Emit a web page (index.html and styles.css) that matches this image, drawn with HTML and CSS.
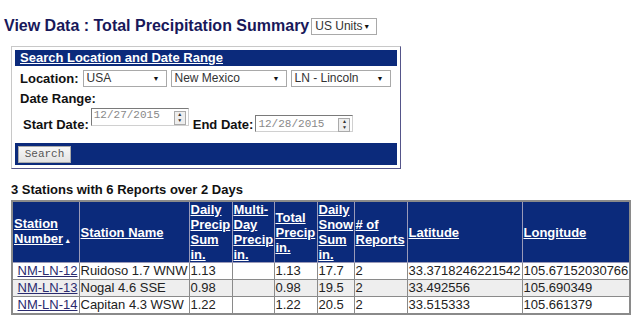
FILE: index.html
```html
<!DOCTYPE html>
<html lang="en">

<head>
  <meta charset="UTF-8">
  <title>View Data : Total Precipitation Summary</title>
  <link rel="stylesheet" href="styles.css">
</head>

<body>
  <div class="head">
    <h1 class="title">View Data : Total Precipitation Summary</h1>
    <span class="select units">US Units<i class="caret">&#9660;</i></span>
  </div>

  <div class="search">
    <div class="search-top"><a href="#">Search Location and Date Range</a></div>
    <div class="row loc">
      <b>Location:</b>
      <span class="select country">USA<i class="caret">&#9660;</i></span>
      <span class="select state">New Mexico<i class="caret">&#9660;</i></span>
      <span class="select county">LN - Lincoln<i class="caret">&#9660;</i></span>
    </div>
    <div class="row range"><b>Date Range:</b></div>
    <div class="row dates">
      <b class="start-label">Start Date:</b>
      <span class="date start">12/27/2015<i class="spin"><em>&#9650;</em><em>&#9660;</em></i></span>
      <b class="end-label">End Date:</b>
      <span class="date end">12/28/2015<i class="spin"><em>&#9650;</em><em>&#9660;</em></i></span>
    </div>
    <div class="search-bottom"><span class="btn">Search</span></div>
  </div>

  <p class="summary">3 Stations with 6 Reports over 2 Days</p>

  <table class="data">
    <colgroup>
      <col style="width: 67px">
      <col style="width: 110px">
      <col style="width: 43px">
      <col style="width: 42px">
      <col style="width: 43px">
      <col style="width: 37px">
      <col style="width: 53px">
      <col style="width: 115px">
      <col style="width: 108px">
    </colgroup>
    <thead>
      <tr>
        <th><a href="#">Station Number</a><span class="sort">&#9650;</span></th>
        <th><a href="#">Station Name</a></th>
        <th><a href="#">Daily Precip Sum in.</a></th>
        <th><a href="#">Multi-Day Precip in.</a></th>
        <th><a href="#">Total Precip in.</a></th>
        <th><a href="#">Daily Snow Sum in.</a></th>
        <th><a href="#"># of Reports</a></th>
        <th><a href="#">Latitude</a></th>
        <th><a href="#">Longitude</a></th>
      </tr>
    </thead>
    <tbody>
      <tr>
        <td class="num"><a href="#">NM-LN-12</a></td>
        <td>Ruidoso 1.7 WNW</td>
        <td>1.13</td>
        <td></td>
        <td>1.13</td>
        <td>17.7</td>
        <td>2</td>
        <td>33.3718246221542</td>
        <td>105.67152030766</td>
      </tr>
      <tr class="alt">
        <td class="num"><a href="#">NM-LN-13</a></td>
        <td>Nogal 4.6 SSE</td>
        <td>0.98</td>
        <td></td>
        <td>0.98</td>
        <td>19.5</td>
        <td>2</td>
        <td>33.492556</td>
        <td>105.690349</td>
      </tr>
      <tr>
        <td class="num"><a href="#">NM-LN-14</a></td>
        <td>Capitan 4.3 WSW</td>
        <td>1.22</td>
        <td></td>
        <td>1.22</td>
        <td>20.5</td>
        <td>2</td>
        <td>33.515333</td>
        <td>105.661379</td>
      </tr>
    </tbody>
  </table>
</body>

</html>
```

FILE: styles.css
```css
body {
  margin: 0;
  font-family: "Liberation Sans", Arial, sans-serif;
  color: #222;
}

.head {
  display: flex;
  align-items: center;
  height: 20px;
  margin: 16px 0 0 4px;
}

.title {
  margin: 0;
  color: #18185a;
  font-size: 16px;
  font-weight: bold;
}

.select {
  position: relative;
  display: inline-block;
  box-sizing: border-box;
  height: 17px;
  padding-left: 3px;
  border: 1px solid #a9a9a9;
  background: #fff;
  color: #333;
  font-size: 12px;
  line-height: 15px;
}

.select .caret {
  position: absolute;
  right: 6px;
  top: 0;
  color: #111;
  font-size: 7px;
  font-style: normal;
}

.units {
  width: 66px;
  margin-left: 2px;
}

/* search box */
.search {
  box-sizing: border-box;
  width: 390px;
  margin: 10px 0 0 11px;
  padding: 3px;
  border: 1px solid;
  border-color: #c8c8c8 #55558a #55558a #c8c8c8;
}

.search-top {
  height: 16px;
  padding-left: 5px;
  background: #0b2a7b;
  font-size: 13px;
  font-weight: bold;
  line-height: 16px;
}

.search-top a,
.data th a {
  color: #fff;
}

.row {
  display: flex;
  align-items: center;
  padding-left: 5px;
  font-size: 13px;
  color: #111;
}

.loc {
  height: 20px;
  margin-top: 2px;
}

.loc b {
  margin-right: 4px;
}

.loc .select {
  margin-right: 4px;
}

.country {
  width: 84px;
}

.state {
  width: 116px;
}

.county {
  width: 100px;
}

.range {
  height: 16px;
  margin-top: 2px;
}

.dates {
  align-items: flex-end;
  height: 26px;
  padding-left: 8px;
  padding-bottom: 7px;
}

.dates b {
  line-height: 15px;
}

.date {
  position: relative;
  box-sizing: border-box;
  width: 98px;
  height: 18px;
  margin: 0 4px 0 2px;
  padding-left: 2px;
  border: 1px solid;
  border-color: #7a7a7a #d0d0d0 #d0d0d0 #7a7a7a;
  color: #888;
  font-family: "Liberation Mono", "Courier New", monospace;
  font-size: 11px;
  line-height: 12px;
}

.start {
  margin-bottom: 6px;
}

.end {
  height: 17px;
  line-height: 16px;
}

.spin {
  position: absolute;
  right: 2px;
  top: 2px;
  display: flex;
  flex-direction: column;
  width: 10px;
  height: 12px;
  border: 1px solid #aaa;
  background: #eee;
}

.spin em {
  display: block;
  height: 6px;
  color: #333;
  font-size: 5px;
  font-style: normal;
  line-height: 6px;
  text-align: center;
}

.search-bottom {
  display: flex;
  align-items: center;
  height: 22px;
  margin-top: 4px;
  padding-left: 3px;
  background: #0b2a7b;
}

.btn {
  box-sizing: border-box;
  width: 53px;
  height: 17px;
  border: 1px solid #aaa;
  background: linear-gradient(#f8f8f8, #e2e2e2);
  color: #555;
  font-family: "Liberation Mono", "Courier New", monospace;
  font-size: 11px;
  line-height: 15px;
  text-align: center;
}

/* results */
.summary {
  margin: 13px 0 3px 11px;
  color: #111;
  font-size: 13px;
  font-weight: bold;
}

.data {
  table-layout: fixed;
  width: 618px;
  margin-left: 11px;
  border-collapse: collapse;
  border: 2px solid #8a8a8a;
  font-size: 13px;
}

.data th {
  padding: 0 1px;
  border: 1px solid #9a9ab8;
  background: #0b2a7b;
  font-size: 13px;
  line-height: 15px;
  text-align: left;
  vertical-align: middle;
}

.data .sort {
  color: #fff;
  font-size: 7px;
  margin-left: 1px;
}

.data td {
  padding: 0 1px;
  border: 1px solid #8a8a8a;
  line-height: 16px;
  white-space: nowrap;
  overflow: hidden;
}

.data .alt td {
  background: #eeeeee;
}

.data .num {
  text-align: right;
}

.data .num a {
  color: #2a2a6e;
}
```
